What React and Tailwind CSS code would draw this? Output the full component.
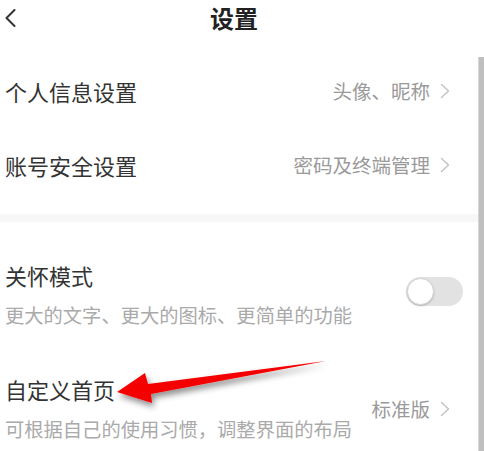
import React from 'react';

const font = { fontFamily: '"Noto Sans CJK SC", "Noto Sans", sans-serif' };

const Chevron = () => (
  <svg width="10" height="16" viewBox="0 0 10 16" className="ml-[10px] shrink-0">
    <path d="M1.5 1.5 L8.5 8 L1.5 14.5" fill="none" stroke="#c4c4c4" strokeWidth="1.5" strokeLinecap="round" strokeLinejoin="round" />
  </svg>
);

const LinkRow = ({ title, value }) => (
  <div className="h-[74px] flex items-center justify-between pl-[5px] pr-[28px]">
    <span className="text-[22px] leading-none text-[#333]">{title}</span>
    <div className="flex items-center">
      <span className="text-[19.5px] leading-none text-[#9a9a9a]">{value}</span>
      <Chevron />
    </div>
  </div>
);

const Toggle = () => (
  <div className="w-[57px] h-[29px] rounded-full bg-[#e2e2e2] flex items-center px-[1px] mr-[15px] mb-[6px]">
    <div className="w-[27px] h-[27px] rounded-full bg-white border border-[#d4d4d4] shadow-[0_1px_2px_rgba(0,0,0,0.2)]" />
  </div>
);

export default function App() {
  return (
    <div className="relative w-full h-[451px] bg-white flex overflow-hidden" style={font}>
      <div className="flex-1 flex flex-col">
        {/* header */}
        <div className="h-[54px]">
          <div className="h-[35px] flex items-center">
            <div className="w-[40px] pl-[5px]">
              <svg width="11" height="18" viewBox="0 0 11 18">
                <path d="M9.5 1 L1.5 9 L9.5 17" fill="none" stroke="#333" strokeWidth="2" strokeLinecap="round" strokeLinejoin="round" />
              </svg>
            </div>
            <div className="flex-1 text-center pr-[50px] text-[24px] leading-none font-bold text-[#222]">设置</div>
          </div>
        </div>

        <LinkRow title="个人信息设置" value="头像、昵称" />
        <LinkRow title="账号安全设置" value="密码及终端管理" />

        <div className="h-[12px]" />
        <div className="h-[8px] bg-[#f7f7f7]" />

        <div className="pt-[42px] pl-[5px]">
          <div className="flex items-center justify-between">
            <div className="flex flex-col">
              <span className="text-[22px] leading-none text-[#333]">关怀模式</span>
              <span className="mt-[20px] text-[19.3px] leading-none text-[#aaa]">更大的文字、更大的图标、更简单的功能</span>
            </div>
            <Toggle />
          </div>

          <div className="mt-[53px] flex items-center justify-between pr-[28px]">
            <div className="flex flex-col">
              <span className="text-[22px] leading-none text-[#333]">自定义首页</span>
              <span className="mt-[20px] text-[19.3px] leading-none text-[#aaa]">可根据自己的使用习惯，调整界面的布局</span>
            </div>
            <div className="flex items-center">
              <span className="text-[19.5px] leading-none text-[#9a9a9a]">标准版</span>
              <Chevron />
            </div>
          </div>
        </div>
      </div>

      {/* scrollbar */}
      <div className="w-[6px] mt-[57px] bg-[#bfbfbf] border-l border-[#d6d6d6]" />

      {/* annotation arrow */}
      <svg className="absolute left-0 top-0 pointer-events-none" width="484" height="451" viewBox="0 0 484 451">
        <defs>
          <filter id="sh" x="-20%" y="-50%" width="140%" height="200%">
            <feDropShadow dx="2" dy="4" stdDeviation="3" floodColor="#000" floodOpacity="0.45" />
          </filter>
        </defs>
        <polygon
          points="117,392 145,373 148,384 326,361 151,394 152,403"
          fill="#f50000"
          filter="url(#sh)"
        />
      </svg>
    </div>
  );
}
